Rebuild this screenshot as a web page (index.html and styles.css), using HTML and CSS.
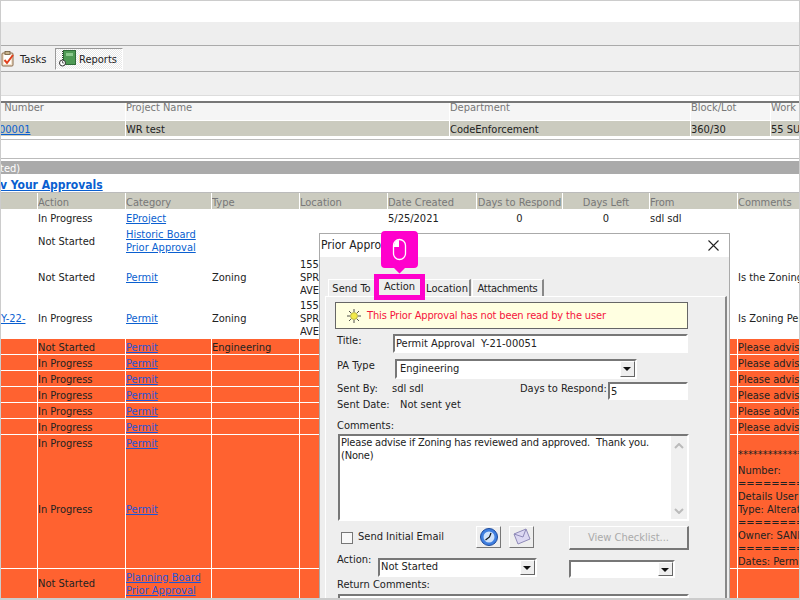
FILE: index.html
```html
<!DOCTYPE html>
<html>
<head>
  <title>Prior Approval</title>
  <link rel="stylesheet" href="styles.css">
</head>
<body>
  <div class="top-space"></div>
  <div class="band-top"></div>
  <div class="nav">
    <svg class="tasks-icon" width="14" height="16" viewBox="0 0 14 16">
      <rect x="1" y="2" width="11" height="13" rx="1" fill="#f3e4cf" stroke="#8a6a4a"/>
      <rect x="3" y="4" width="7" height="9" fill="#fff"/>
      <rect x="4" y="0.5" width="5" height="3" fill="#c9b48f" stroke="#6e5a3c" stroke-width="0.8"/>
      <path d="M3.5 9l2.5 3 6-8" fill="none" stroke="#e0401c" stroke-width="2"/>
    </svg>
    <span class="nav-item">Tasks</span>
    <span class="nav-active">
      <svg width="17" height="17" viewBox="0 0 17 17">
        <rect x="4.500" y="0.500" width="12" height="14" fill="#4f9a55" stroke="#2f6b38"/>
        <rect x="7" y="3" width="7" height="3" fill="#8cc98e"/>
        <path d="M3.500 1v10" stroke="#333" stroke-dasharray="1 1"/>
        <circle cx="3.500" cy="13" r="3" fill="#fff" stroke="#333"/>
        <path d="M3.500 11v2h1.500" fill="none" stroke="#333" stroke-width="0.7"/>
      </svg>
      <span class="nav-label">Reports</span>
    </span>
  </div>
  <div class="band-bottom"></div>

  <table class="project-table">
    <colgroup>
      <col class="pc1"><col class="pc2"><col class="pc3"><col class="pc4"><col class="pc5">
    </colgroup>
    <tr class="project-head">
      <td>&nbsp;Number</td><td>Project Name</td><td>Department</td><td>Block/Lot</td><td>Work</td>
    </tr>
    <tr class="project-row">
      <td><a href="#" class="cut-link">00001</a></td><td>WR test</td><td>CodeEnforcement</td><td>360/30</td><td>55 SUMMER</td>
    </tr>
  </table>
  <div class="rule-a"></div>
  <div class="rule-b"></div>
  <div class="section-bar">ted)</div>
  <div class="section-link"><a href="#">v Your Approvals</a></div>

  <table class="approvals">
    <colgroup>
      <col class="c1"><col class="c2"><col class="c3"><col class="c4"><col class="c5">
      <col class="c6"><col class="c7"><col class="c8"><col class="c9"><col class="c10">
    </colgroup>
    <tr class="head">
      <td></td><td>Action</td><td>Category</td><td>Type</td><td>Location</td><td>Date Created</td>
      <td class="mid">Days to Respond</td><td class="mid">Days Left</td><td>From</td><td>Comments</td>
    </tr>
    <tr class="h16">
      <td></td><td>In Progress</td><td><a href="#">EProject</a></td><td></td><td></td><td>5/25/2021</td>
      <td class="mid">0</td><td class="mid">0</td><td>sdl sdl</td><td></td>
    </tr>
    <tr class="h31">
      <td></td><td>Not Started</td><td><a href="#">Historic Board<br>Prior Approval</a></td><td></td><td></td><td></td>
      <td></td><td></td><td></td><td></td>
    </tr>
    <tr class="h42">
      <td></td><td>Not Started</td><td><a href="#">Permit</a></td><td>Zoning</td><td>155<br>SPRINGFIELD<br>AVE</td><td></td>
      <td></td><td></td><td></td><td>Is the Zoning Permit approved?</td>
    </tr>
    <tr class="h40">
      <td><a href="#">Y-22-</a></td><td>In Progress</td><td><a href="#">Permit</a></td><td>Zoning</td><td>155<br>SPRINGFIELD<br>AVE</td><td></td>
      <td></td><td></td><td></td><td>Is Zoning Permit approved?</td>
    </tr>
    <tr class="late h16">
      <td></td><td>Not Started</td><td><a href="#">Permit</a></td><td>Engineering</td><td></td><td></td>
      <td></td><td></td><td></td><td>Please advise if Zoning</td>
    </tr>
    <tr class="late h16">
      <td></td><td>In Progress</td><td><a href="#">Permit</a></td><td></td><td></td><td></td>
      <td></td><td></td><td></td><td>Please advise if Zoning</td>
    </tr>
    <tr class="late h16">
      <td></td><td>In Progress</td><td><a href="#">Permit</a></td><td></td><td></td><td></td>
      <td></td><td></td><td></td><td>Please advise if Zoning</td>
    </tr>
    <tr class="late h16">
      <td></td><td>In Progress</td><td><a href="#">Permit</a></td><td></td><td></td><td></td>
      <td></td><td></td><td></td><td>Please advise if Zoning</td>
    </tr>
    <tr class="late h16">
      <td></td><td>In Progress</td><td><a href="#">Permit</a></td><td></td><td></td><td></td>
      <td></td><td></td><td></td><td>Please advise if Zoning</td>
    </tr>
    <tr class="late h16">
      <td></td><td>In Progress</td><td><a href="#">Permit</a></td><td></td><td></td><td></td>
      <td></td><td></td><td></td><td>Please advise if Zoning</td>
    </tr>
    <tr class="late tall">
      <td></td>
      <td><div class="pair"><div>In Progress</div><div class="pair-low">In Progress</div></div></td>
      <td><div class="pair"><div><a href="#">Permit</a></div><div class="pair-low"><a href="#">Permit</a></div></div></td>
      <td></td><td></td><td></td><td></td><td></td><td></td>
      <td class="long-note">
        <div class="note-gap"></div>
        <div class="note-stars">***************************</div>
        <div>Number:</div>
        <div>===========================</div>
        <div>Details User</div>
        <div>Type: Alteration</div>
        <div>===========================</div>
        <div>Owner: SANDERS</div>
        <div>===========================</div>
        <div>Dates: Permit</div>
      </td>
    </tr>
    <tr class="late h30">
      <td></td><td>Not Started</td><td><a href="#">Planning Board<br>Prior Approval</a></td><td></td><td></td><td></td>
      <td></td><td></td><td></td><td></td>
    </tr>
  </table>

  <div class="dialog">
    <div class="dialog-title">
      <span>Prior Approval</span>
      <svg width="11" height="11" viewBox="0 0 11 11"><path d="M0.5 0.5l10 10M10.5 0.5l-10 10" stroke="#222" stroke-width="1.1"/></svg>
    </div>
    <div class="tabs">
      <div class="tab tab-send">Send To</div>
      <div class="tab-action">Action</div>
      <div class="tab tab-location">Location</div>
      <div class="tab tab-attach">Attachments</div>
    </div>
    <div class="panel">
      <div class="notice">
        <svg width="14" height="14" viewBox="0 0 14 14">
          <path d="M7 0v3M7 11v3M0 7h3M11 7h3M2 2l2.200 2.200M12 2l-2.200 2.200M2 12l2.200-2.200M12 12l-2.200-2.200" stroke="#222" stroke-width="0.8"/>
          <circle cx="7" cy="7" r="3.500" fill="#f2ea4a" stroke="#8a8a30" stroke-width="0.6"/>
        </svg>
        <span>This Prior Approval has not been read by the user</span>
      </div>
      <div class="row row-title">
        <label class="label-title">Title:</label>
        <div class="input input-title">Permit Approval&nbsp; Y-21-00051</div>
      </div>
      <div class="row row-type">
        <label class="label-type">PA Type</label>
        <div class="select select-type">Engineering<span class="arrow"></span></div>
      </div>
      <div class="row row-sent">
        <div class="sent-info">
          <div class="sent-line"><span class="sent-by">Sent By:</span><span>sdl sdl</span></div>
          <div class="sent-line"><span class="sent-date">Sent Date:</span><span>Not sent yet</span></div>
        </div>
        <div class="days">
          <label>Days to Respond:</label>
          <div class="input input-days">5</div>
        </div>
      </div>
      <div class="comments-label">Comments:</div>
      <div class="textarea">
        <div class="textarea-text">Please advise if Zoning has reviewed and approved.&nbsp; Thank you.<br>(None)</div>
        <div class="scroll">
          <svg width="10" height="6" viewBox="0 0 10 6"><path d="M1 5l4-4 4 4" fill="none" stroke="#bbb" stroke-width="2"/></svg>
          <svg width="10" height="6" viewBox="0 0 10 6"><path d="M1 1l4 4 4-4" fill="none" stroke="#bbb" stroke-width="2"/></svg>
        </div>
      </div>
      <div class="row row-email">
        <span class="check"></span>
        <span class="email-label">Send Initial Email</span>
        <span class="icon-btn">
          <svg width="20" height="20" viewBox="0 0 20 20">
            <circle cx="10" cy="10" r="8.500" fill="#3f7fe0" stroke="#1d4a9c"/>
            <circle cx="10" cy="10" r="5.500" fill="#cfe2fb"/>
            <path d="M6.500 13l4-3 1.500-4" fill="none" stroke="#111" stroke-width="1.200"/>
          </svg>
        </span>
        <span class="icon-btn icon-mail">
          <svg width="20" height="18" viewBox="0 0 20 18">
            <path d="M2 6l12-5 4 10-12 5z" fill="#dcd8f2" stroke="#8f8ab8"/>
            <path d="M2 6l9 3 3-8" fill="none" stroke="#8f8ab8"/>
          </svg>
        </span>
        <span class="checklist-btn">View Checklist...</span>
      </div>
      <div class="row row-action">
        <label class="label-action">Action:</label>
        <div class="select select-action">Not Started<span class="arrow"></span></div>
        <div class="select select-other"><span class="arrow"></span></div>
      </div>
      <div class="return-label">Return Comments:</div>
      <div class="textarea textarea-return"></div>
    </div>
  </div>

  <svg class="callout" width="37" height="43" viewBox="0 0 37 43">
    <path d="M4 0h29a4 4 0 0 1 4 4v29a4 4 0 0 1-4 4H24l-5.500 5.500L13 37H4a4 4 0 0 1-4-4V4a4 4 0 0 1 4-4z" fill="#ff00cc"/>
    <rect x="12.500" y="8.500" width="12" height="20" rx="6" fill="none" stroke="#fff" stroke-width="1.300"/>
    <path d="M18 9a5.500 5.500 0 0 0-5 6v1h5z" fill="#fff"/>
  </svg>

  <div class="frame"></div>
</body>
</html>
```

FILE: styles.css
```css
html, body {
  margin: 0;
  padding: 0;
  height: 600px;
  overflow: hidden;
  background: #fff;
}

body {
  position: relative;
  width: 800px;
  font-family: "DejaVu Sans", Arial, sans-serif;
  font-stretch: condensed;
  font-size: 11px;
  line-height: 13px;
  color: #222;
}

a {
  color: #0a5fd0;
}

.top-space {
  height: 22px;
}

.band-top {
  height: 23px;
  background: #eee;
  border-bottom: 1px solid #aaa;
}

.nav {
  display: flex;
  align-items: center;
  height: 25px;
  background: #f0f0f0;
  border-bottom: 1px solid #aaa;
}

.tasks-icon {
  margin-left: 1px;
}

.nav-item {
  margin: 2px 0 0 5px;
  width: 35px;
}

.nav-active {
  display: flex;
  align-items: center;
  gap: 3px;
  box-sizing: border-box;
  width: 68px;
  height: 22px;
  padding-left: 3px;
  border: 1px solid #fff;
  border-left-color: #999;
  border-top-color: #999;
  background: repeating-conic-gradient(#fff 0 25%, #e8e8e8 0 50%) 0 0 / 2px 2px;
}

.nav-label {
  margin-top: 2px;
}

.band-bottom {
  height: 23px;
  background: #f0f0f0;
  border-bottom: 1px solid #ddd;
  margin-bottom: 5px;
}

.project-table {
  table-layout: fixed;
  width: 900px;
  border-collapse: separate;
  border-spacing: 1px 0;
  border-top: 2px solid #777;
}

.project-table td {
  padding: 0;
  white-space: nowrap;
  overflow: hidden;
  border-bottom: 1px solid #fff;
}

.pc1 { width: 124px; }
.pc2 { width: 323px; }
.pc3 { width: 240px; }
.pc4 { width: 79px; }
.pc5 { width: 128px; }

.project-head td {
  height: 17px;
  line-height: 10px;
  vertical-align: top;
  background: #f5f5f5;
  color: #777;
}

.project-row td {
  height: 14px;
  padding-top: 1px;
  background: #cbcbbf;
}

.cut-link {
  margin-left: -2px;
}

.rule-a {
  height: 2px;
  margin-bottom: 18px;
  border-bottom: 1px solid #bbb;
}

.rule-b {
  height: 2px;
  border-top: 1px solid #bbb;
}

.section-bar {
  height: 13px;
  line-height: 15px;
  background: #aaa;
  color: #fff;
}

.section-link {
  height: 18px;
  padding-top: 5px;
  box-sizing: border-box;
  font-weight: bold;
  font-size: 12px;
}

.approvals {
  table-layout: fixed;
  width: 900px;
  border-collapse: separate;
  border-spacing: 1px 0;
  border-top: 1px solid #bbb;
}

.approvals td {
  padding: 0;
  overflow: hidden;
  border-bottom: 1px solid #fff;
}

.c1 { width: 36px; }
.c2 { width: 87px; }
.c3 { width: 85px; }
.c4 { width: 87px; }
.c5 { width: 87px; }
.c6 { width: 88px; }
.c7 { width: 85px; }
.c8 { width: 86px; }
.c9 { width: 87px; }
.c10 { width: 261px; }

.approvals td:last-child,
.head td {
  white-space: nowrap;
}

.approvals .head td {
  height: 14px;
  padding-top: 2px;
  background: #cbcbbf;
  color: #777;
}

.mid {
  text-align: center;
}

.approvals .h16 td { height: 14px; padding-top: 1px; }
.h30 td { height: 29px; }
.h31 td { height: 30px; }
.h40 td { height: 39px; }
.approvals .h42 td { height: 40px; padding-bottom: 1px; }

.late td {
  background: #ff6230;
}

.late a {
  color: #1f55d8;
}

.approvals .tall td {
  padding-top: 2px;
}

.pair {
  display: flex;
  flex-direction: column;
  height: 131px;
}

.pair-low {
  flex: 1;
  display: flex;
  align-items: center;
}

.long-note {
  vertical-align: top;
}

.note-gap {
  height: 11px;
}

.note-stars {
  margin-bottom: 3px;
}

.dialog {
  position: absolute;
  left: 319px;
  top: 233px;
  box-sizing: border-box;
  width: 411px;
  height: 420px;
  background: #eee;
  border: 1px solid #aaa;
}

.dialog-title {
  display: flex;
  align-items: center;
  justify-content: space-between;
  height: 23px;
  padding: 0 10px 0 1px;
  background: #fff;
  font-size: 12px;
}

.tabs {
  display: flex;
  align-items: flex-end;
  height: 39px;
  margin-left: 8px;
}

.tab {
  box-sizing: border-box;
  height: 17px;
  line-height: 18px;
  text-align: center;
  border: 1px solid #fff;
  border-bottom: 0;
  border-right: 2px solid #888;
}

.tab-send { width: 46px; border-right: 0; }
.tab-location { width: 46px; border-left: 0; }
.tab-attach { width: 72px; margin-left: 1px; letter-spacing: -0.3px; }

.tab-action {
  position: relative;
  z-index: 1;
  box-sizing: border-box;
  width: 51px;
  height: 26px;
  margin-bottom: -4px;
  line-height: 15px;
  text-align: center;
  background: #eee;
  border: 5px solid #ff00cc;
}

.panel {
  box-sizing: border-box;
  width: 402px;
  height: 360px;
  margin-left: 5px;
  padding: 5px 0 0 11px;
  border-left: 1px solid #fff;
  border-top: 1px solid #fff;
  border-right: 2px solid #888;
}

.notice {
  display: flex;
  align-items: center;
  gap: 6px;
  box-sizing: border-box;
  width: 353px;
  height: 27px;
  margin-left: -2px;
  padding-left: 11px;
  letter-spacing: -0.14px;
  background: #ffffe1;
  border: 1px solid #666;
  color: #f5143c;
}

.row {
  display: flex;
  align-items: center;
}

.input, .select, .textarea {
  position: relative;
  box-sizing: border-box;
  background: #fff;
  border: 2px solid;
  border-color: #777 #fff #fff #777;
}

.input, .select {
  padding-left: 1px;
}

.row-title {
  margin-top: 5px;
  height: 19px;
}

.label-title {
  width: 56px;
  margin-top: -7px;
}

.input-title {
  width: 295px;
  height: 19px;
  line-height: 16px;
}

.row-type {
  margin-top: 6px;
  height: 20px;
}

.label-type {
  width: 58px;
  margin-top: -7px;
}

.select-type {
  width: 242px;
  height: 20px;
  line-height: 15px;
  padding-left: 3px;
}

.arrow {
  position: absolute;
  right: 0;
  top: 0;
  bottom: 0;
  width: 15px;
  background: #eee;
  border: 1px solid;
  border-color: #fff #666 #666 #fff;
  box-sizing: border-box;
}

.arrow::after {
  content: "";
  position: absolute;
  left: 2px;
  top: 5px;
  border: 4px solid transparent;
  border-top: 4px solid #111;
  border-bottom: 0;
}

.row-sent {
  align-items: flex-start;
  margin-top: 2px;
  height: 38px;
}

.sent-info {
  width: 183px;
}

.sent-line {
  display: flex;
  height: 16px;
  line-height: 16px;
}

.sent-by { width: 55px; }
.sent-date { width: 63px; }

.days {
  display: flex;
  gap: 2px;
  margin-top: 1px;
}

.days label {
  width: 86px;
  white-space: nowrap;
}

.input-days {
  width: 80px;
  height: 18px;
  line-height: 16px;
}

.comments-label {
  height: 13px;
}

.textarea {
  display: flex;
  justify-content: space-between;
  width: 351px;
  height: 87px;
  margin: 2px 0 0 1px;
}

.textarea-text {
  padding-left: 1px;
  letter-spacing: -0.18px;
}

.scroll {
  display: flex;
  flex-direction: column;
  align-items: center;
  justify-content: space-between;
  box-sizing: border-box;
  width: 16px;
  padding: 7px 0 5px;
  background: #f0f0f0;
}

.row-email {
  height: 24px;
  margin-top: 5px;
}

.check {
  box-sizing: border-box;
  width: 12px;
  height: 12px;
  margin-left: 4px;
  margin-top: -1px;
  background: #f8f8f8;
  border: 1px solid #777;
}

.email-label {
  width: 118px;
  margin-left: 5px;
  margin-top: -3px;
}

.icon-btn {
  display: flex;
  align-items: center;
  justify-content: center;
  box-sizing: border-box;
  width: 25px;
  height: 22px;
  margin-top: -2px;
  background: #eee;
  border: 1px solid;
  border-color: #fff #777 #777 #fff;
}

.icon-mail {
  margin-left: 8px;
}

.checklist-btn {
  box-sizing: border-box;
  width: 120px;
  height: 24px;
  margin-left: 35px;
  line-height: 21px;
  text-align: center;
  color: #aaa;
  background: #eee;
  border: 1px solid;
  border-color: #fff #777 #777 #fff;
  border-width: 1px 2px 2px 1px;
}

.row-action {
  margin-top: 7px;
  height: 20px;
}

.label-action {
  width: 41px;
  margin-top: -16px;
}

.select-action {
  width: 159px;
  height: 19px;
  line-height: 14px;
}

.select-other {
  width: 106px;
  height: 18px;
  margin: 3px 0 0 32px;
}

.return-label {
  height: 13px;
  margin-top: 1px;
}

.textarea-return {
  height: 40px;
  margin-top: 3px;
}

.callout {
  position: absolute;
  left: 381px;
  top: 231px;
}

.frame {
  position: absolute;
  left: 0;
  top: 0;
  right: 0;
  height: 600px;
  box-sizing: border-box;
  border: 1px solid #ccc;
  border-bottom-width: 2px;
  pointer-events: none;
}
```
